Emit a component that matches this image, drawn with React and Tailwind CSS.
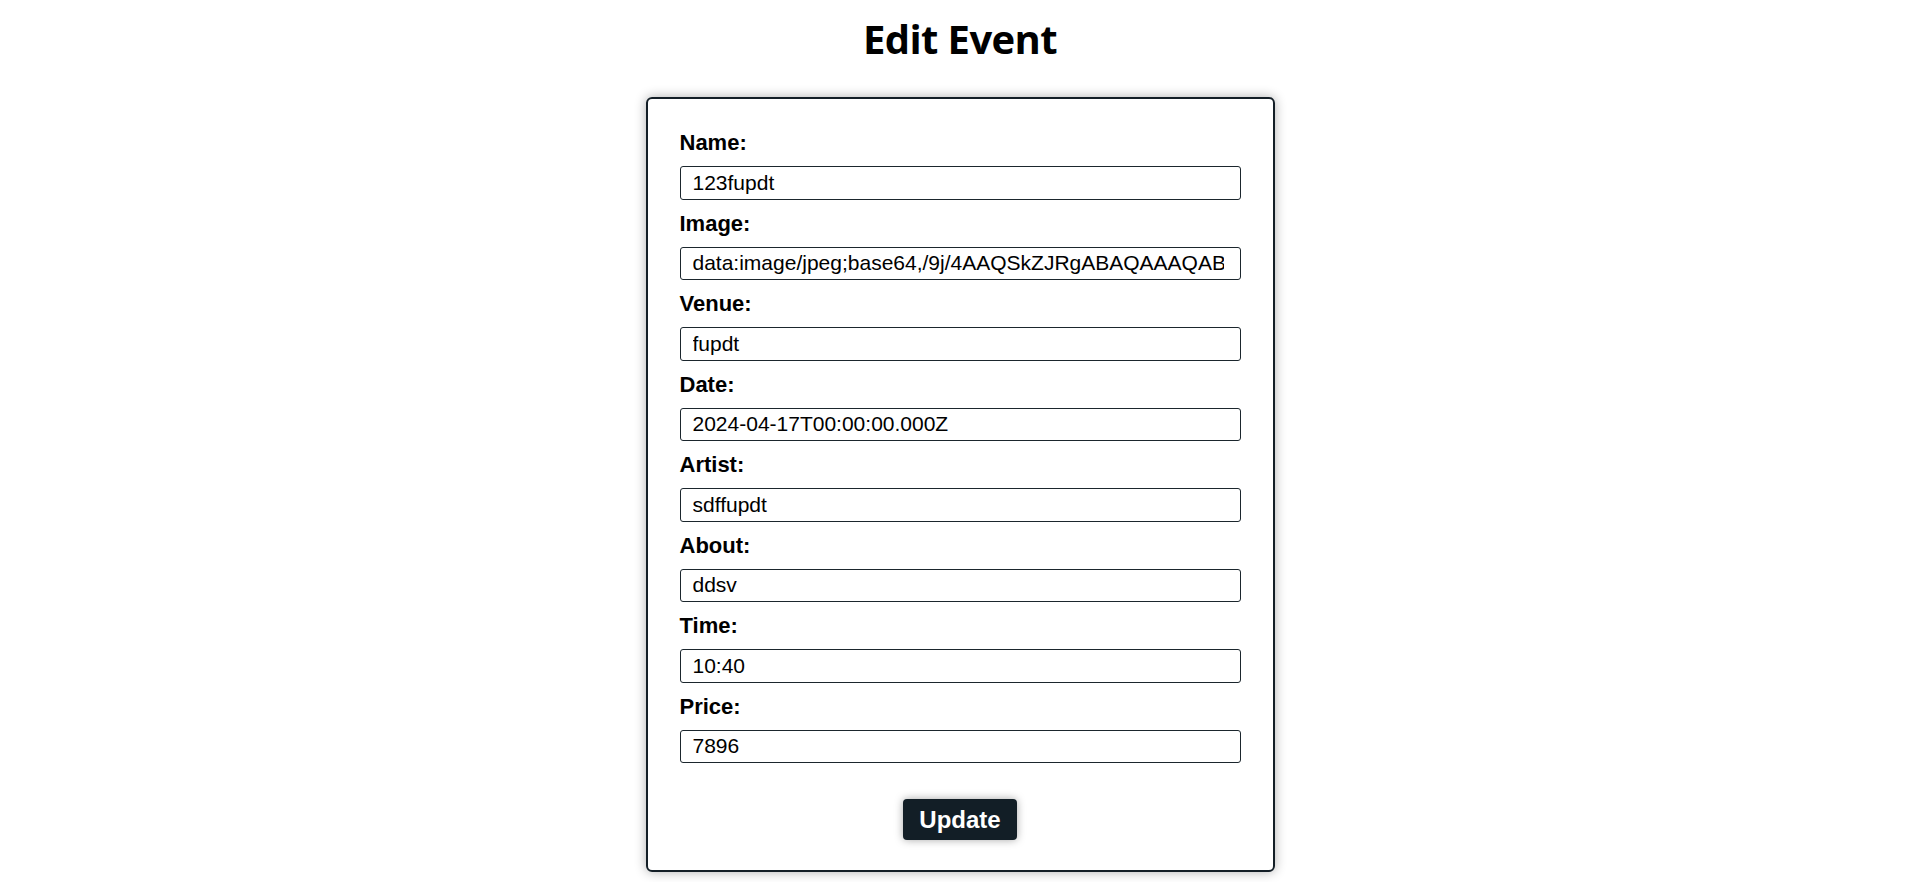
import React from "react";

const fields = [
  ["Name:", "123fupdt"],
  ["Image:", "data:image/jpeg;base64,/9j/4AAQSkZJRgABAQAAAQABAAD/2wBDAAMCAgICAgMCAgIDAwMDBAYEBAQEBAgGBgUGCQgKCgkICQkKDA8MCgsOCwkJDRENDg8QEBEQCgwSExIQEw8QEBD"],
  ["Venue:", "fupdt"],
  ["Date:", "2024-04-17T00:00:00.000Z"],
  ["Artist:", "sdffupdt"],
  ["About:", "ddsv"],
  ["Time:", "10:40"],
  ["Price:", "7896"],
];

export default function App() {
  return (
    <div className="min-h-[882px] bg-white flex flex-col items-center text-black">
      <h1 className="pt-[12px] text-[40px] leading-[54px] font-bold tracking-[-0.6px] [font-family:'Open_Sans','Noto_Sans',sans-serif]">
        Edit Event
      </h1>
      <form
        className="mt-[31px] w-[629px] border-2 border-[#131e26] rounded-[6px] shadow-[0_0_12px_rgba(0,0,0,0.32)] px-[32px] pt-[31px] pb-[30px] flex flex-col [font-family:'Liberation_Sans',Arial,sans-serif]"
        onSubmit={(e) => e.preventDefault()}
      >
        {fields.map(([label, value]) => (
          <div key={label} className="flex flex-col">
            <label className="text-[22px] leading-[25px] font-bold mb-[11px]">{label}</label>
            <input
              readOnly
              value={value}
              className="h-[33.5px] mb-[11px] border border-[#1b262d] rounded-[3px] pl-[12px] pr-[16px] text-[21px] text-black outline-none bg-white"
            />
          </div>
        ))}
        <div className="flex justify-center mt-[25px]">
          <button
            type="submit"
            className="h-[41px] px-[16px] rounded-[4px] bg-[#121e26] text-white text-[24px] font-bold leading-[28px] shadow-[0_0_8px_rgba(0,0,0,0.35)]"
          >
            Update
          </button>
        </div>
      </form>
    </div>
  );
}
